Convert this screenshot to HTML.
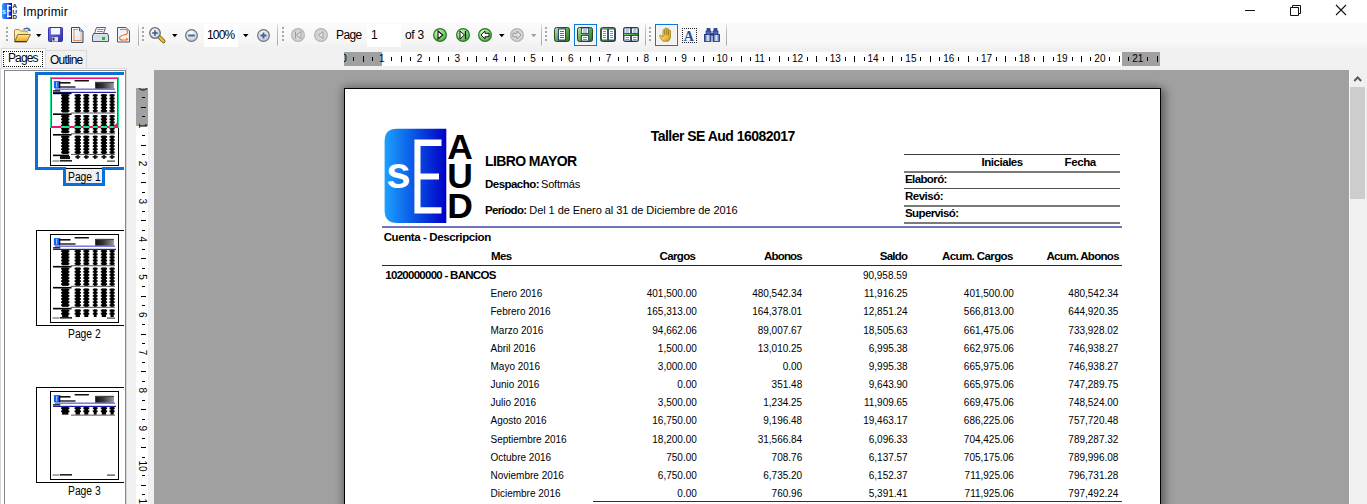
<!DOCTYPE html><html><head><meta charset='utf-8'><title>Imprimir</title><style>
*{margin:0;padding:0;box-sizing:border-box}
html,body{width:1367px;height:504px;overflow:hidden;background:#f0f0f0;font-family:"Liberation Sans",sans-serif;color:#000}
.t{position:absolute;line-height:1;white-space:pre}
.r{position:absolute}
svg{position:absolute;overflow:visible}
</style></head><body>
<div class='r' style='left:0px;top:0px;width:1367px;height:23px;background:#fff;'></div>
<svg style='left:0;top:0' width='20' height='22' viewBox='0 0 20 22'>
<defs><linearGradient id='ig' x1='0' x2='1'><stop offset='0' stop-color='#3aa0ff'/><stop offset='1' stop-color='#0010d0'/></linearGradient></defs>
<path d='M4 3H12V19H4Q2 19 2 17V5Q2 3 4 3Z' fill='url(#ig)'/>
<text x='2.1' y='14.3' font-family='Liberation Sans' font-weight='bold' font-size='7.5' fill='#d8ecff'>s</text>
<rect x='7.2' y='4.5' width='1.4' height='13' fill='#fff'/><rect x='7' y='5' width='4' height='1.3' fill='#fff'/><rect x='7' y='10.3' width='3.5' height='1.3' fill='#fff'/><rect x='7' y='15.7' width='4' height='1.3' fill='#fff'/>
<text x='12.5' y='8.2' font-family='Liberation Sans' font-weight='bold' font-size='6.2' fill='#111'>A</text>
<text x='12.5' y='13.6' font-family='Liberation Sans' font-weight='bold' font-size='6.2' fill='#111'>U</text>
<text x='12.5' y='19' font-family='Liberation Sans' font-weight='bold' font-size='6.2' fill='#111'>D</text>
</svg>
<div class='t' style='left:23px;top:6px;font-size:12px;letter-spacing:0.2px;'>Imprimir</div>
<div class='r' style='left:1245px;top:10px;width:10px;height:1px;background:#111;'></div>
<svg style='left:1285px;top:0' width='20' height='22'><path d='M5.5 7.5h8v8h-8z M7.5 7.5v-2h8v8h-2' fill='none' stroke='#111' stroke-width='1'/></svg>
<svg style='left:1331px;top:0' width='20' height='22'><path d='M5 5L15 15M15 5L5 15' stroke='#111' stroke-width='1.1'/></svg>
<div class='r' style='left:0px;top:23px;width:1367px;height:25px;background:linear-gradient(#fafafa,#f9f9f9 70%,#f3f3f3);'></div>
<div class='r' style='left:3px;top:23px;width:135px;height:25px;background:linear-gradient(#fbfbfb,#f6f6f6 70%,#f0f0f0);'></div>
<div class='r' style='left:138px;top:24px;width:1px;height:22px;background:linear-gradient(#e8e8e8,#c0c0c0 30%,#a8a8a8 90%,#d0d0d0);'></div>
<div class='r' style='left:140px;top:23px;width:137px;height:25px;background:linear-gradient(#fbfbfb,#f6f6f6 70%,#f0f0f0);'></div>
<div class='r' style='left:277px;top:24px;width:1px;height:22px;background:linear-gradient(#e8e8e8,#c0c0c0 30%,#a8a8a8 90%,#d0d0d0);'></div>
<div class='r' style='left:279px;top:23px;width:262px;height:25px;background:linear-gradient(#fbfbfb,#f6f6f6 70%,#f0f0f0);'></div>
<div class='r' style='left:541px;top:24px;width:1px;height:22px;background:linear-gradient(#e8e8e8,#c0c0c0 30%,#a8a8a8 90%,#d0d0d0);'></div>
<div class='r' style='left:543px;top:23px;width:102px;height:25px;background:linear-gradient(#fbfbfb,#f6f6f6 70%,#f0f0f0);'></div>
<div class='r' style='left:645px;top:24px;width:1px;height:22px;background:linear-gradient(#e8e8e8,#c0c0c0 30%,#a8a8a8 90%,#d0d0d0);'></div>
<div class='r' style='left:647px;top:23px;width:79px;height:25px;background:linear-gradient(#fbfbfb,#f6f6f6 70%,#f0f0f0);'></div>
<div class='r' style='left:726px;top:24px;width:1px;height:22px;background:linear-gradient(#e8e8e8,#c0c0c0 30%,#a8a8a8 90%,#d0d0d0);'></div>
<div class='r' style='left:6px;top:27px;width:2px;height:2px;background:#a8a8a8;'></div>
<div class='r' style='left:6px;top:31px;width:2px;height:2px;background:#a8a8a8;'></div>
<div class='r' style='left:6px;top:35px;width:2px;height:2px;background:#a8a8a8;'></div>
<div class='r' style='left:6px;top:39px;width:2px;height:2px;background:#a8a8a8;'></div>
<div class='r' style='left:142px;top:27px;width:2px;height:2px;background:#a8a8a8;'></div>
<div class='r' style='left:142px;top:31px;width:2px;height:2px;background:#a8a8a8;'></div>
<div class='r' style='left:142px;top:35px;width:2px;height:2px;background:#a8a8a8;'></div>
<div class='r' style='left:142px;top:39px;width:2px;height:2px;background:#a8a8a8;'></div>
<div class='r' style='left:282px;top:27px;width:2px;height:2px;background:#a8a8a8;'></div>
<div class='r' style='left:282px;top:31px;width:2px;height:2px;background:#a8a8a8;'></div>
<div class='r' style='left:282px;top:35px;width:2px;height:2px;background:#a8a8a8;'></div>
<div class='r' style='left:282px;top:39px;width:2px;height:2px;background:#a8a8a8;'></div>
<div class='r' style='left:545px;top:27px;width:2px;height:2px;background:#a8a8a8;'></div>
<div class='r' style='left:545px;top:31px;width:2px;height:2px;background:#a8a8a8;'></div>
<div class='r' style='left:545px;top:35px;width:2px;height:2px;background:#a8a8a8;'></div>
<div class='r' style='left:545px;top:39px;width:2px;height:2px;background:#a8a8a8;'></div>
<div class='r' style='left:649px;top:27px;width:2px;height:2px;background:#a8a8a8;'></div>
<div class='r' style='left:649px;top:31px;width:2px;height:2px;background:#a8a8a8;'></div>
<div class='r' style='left:649px;top:35px;width:2px;height:2px;background:#a8a8a8;'></div>
<div class='r' style='left:649px;top:39px;width:2px;height:2px;background:#a8a8a8;'></div>
<svg style='left:14px;top:26px' width='18' height='17' viewBox='0 0 18 17'>
<defs><linearGradient id='fo' x1='0' y1='0' x2='0' y2='1'><stop offset='0' stop-color='#fde68a'/><stop offset='1' stop-color='#eaa820'/></linearGradient>
<linearGradient id='fb' x1='0' y1='0' x2='1' y2='1'><stop offset='0' stop-color='#fff4b8'/><stop offset='1' stop-color='#e8c860'/></linearGradient></defs>
<path d='M0.5 15.5V4.5Q0.5 3.5 1.5 3.5H5l1.5 1.5h6.5v2.5' fill='url(#fb)' stroke='#a08850' stroke-width='1'/>
<path d='M0.5 15.5V6h12.5v2' fill='url(#fb)' stroke='none'/>
<path d='M0.5 4.5V15.5' stroke='#a08850' stroke-width='1'/>
<path d='M3.8 8.5H16.5L12.8 15.5H0.8Z' fill='url(#fo)' stroke='#8a6e30' stroke-width='1'/>
<path d='M0.8 15.8H12.8' stroke='#2a2010' stroke-width='1'/>
<path d='M9.5 3.6Q12.5 0.8 15.2 3.4' fill='none' stroke='#3a68a8' stroke-width='1.4'/><path d='M13.4 4.8L16.6 5.2L16 2.2Z' fill='#3a68a8'/>
</svg>
<svg style='left:36px;top:34px' width='6' height='4'><path d='M0 0H5.5L2.75 3.2Z' fill='#000'/></svg>
<svg style='left:48px;top:27px' width='15' height='15' viewBox='0 0 15 15'>
<defs><linearGradient id='fl' x1='0' y1='0' x2='1' y2='1'><stop offset='0' stop-color='#7a7ae8'/><stop offset='1' stop-color='#2c2ca8'/></linearGradient></defs>
<rect x='0.5' y='0.5' width='14' height='14' rx='1' fill='url(#fl)' stroke='#3232a0'/>
<rect x='3' y='1' width='9' height='6.5' fill='#f4f6ff'/>
<rect x='4' y='10' width='6' height='4.5' fill='#dfe3f0'/><rect x='4.5' y='10.5' width='2' height='3' fill='#333'/>
</svg>
<svg style='left:71px;top:27px' width='13' height='16' viewBox='0 0 13 16'>
<defs><linearGradient id='ps' x1='0' y1='0' x2='1' y2='1'><stop offset='0' stop-color='#ffffff'/><stop offset='1' stop-color='#d8e2f0'/></linearGradient></defs>
<path d='M0.5 0.5h8l3.5 3.5v11.5h-11.5z' fill='url(#ps)' stroke='#2a4468'/>
<path d='M8.5 0.5v3.5h3.5' fill='#c8d4e8' stroke='#2a4468' stroke-width='0.8'/>
<path d='M3 2v12M2 13.5h8.5M2 2.5h5' stroke='#f08848' stroke-width='1'/><path d='M10 5v8' stroke='#f0b890' stroke-width='1'/>
</svg>
<svg style='left:92px;top:27px' width='17' height='16' viewBox='0 0 17 16'>
<defs><linearGradient id='pr' x1='0' y1='0' x2='0' y2='1'><stop offset='0' stop-color='#e8eef8'/><stop offset='1' stop-color='#9aa8c0'/></linearGradient></defs>
<path d='M4.5 0.5h9l-2 6h-9z' fill='#f4f6fa' stroke='#56657e'/>
<path d='M5.5 2.5h6M5 4.5h6' stroke='#8090a8'/>
<path d='M1.5 6.5h14l1 2.5v5.5H0.5V9z' fill='url(#pr)' stroke='#4a5870'/>
<rect x='1' y='9.5' width='15' height='4.5' fill='#d8e0ee'/>
<rect x='10' y='10' width='3' height='3' fill='#18c018'/>
</svg>
<svg style='left:117px;top:27px' width='13' height='16' viewBox='0 0 13 16'>
<path d='M0.5 0.5h8.5l3.5 3.5v11h-12z' fill='#eef2f8' stroke='#3c5a80'/>
<path d='M3 2.5h5.5q2 0 2 2.5t-3.5 3t-4.5 2.5q0 3 4 2.5h3' fill='none' stroke='#f07830' stroke-width='1.2'/><path d='M9 10.5l2.6 1.7L9 14z' fill='#f07830'/>
</svg>
<svg style='left:149px;top:27px' width='17' height='16' viewBox='0 0 17 16'>
<defs><radialGradient id='mg149' cx='0.4' cy='0.35' r='0.7'><stop offset='0' stop-color='#ffffff'/><stop offset='1' stop-color='#b8cbe8'/></radialGradient></defs>
<path d='M10.2 9.8l4.2 4.4' stroke='#7a5a10' stroke-width='4' stroke-linecap='round'/><path d='M10.4 10l3.9 4.1' stroke='#e8c040' stroke-width='2.5' stroke-linecap='round'/>
<circle cx='6' cy='6' r='5.3' fill='url(#mg149)' stroke='#6a6a6a' stroke-width='1.2'/>
<path d='M3.2 6h5.6M6 3.2v5.6' stroke='#3c5a80' stroke-width='1.6'/>
</svg>
<svg style='left:172px;top:34px' width='6' height='4'><path d='M0 0H5.5L2.75 3.2Z' fill='#000'/></svg>
<svg style='left:185px;top:29px' width='13' height='13' viewBox='0 0 12 12'>
<defs><radialGradient id='zc185' cx='0.45' cy='0.3' r='0.8'><stop offset='0' stop-color='#ffffff'/><stop offset='1' stop-color='#a8c0e0'/></radialGradient></defs>
<circle cx='6' cy='6' r='5.4' fill='url(#zc185)' stroke='#707070' stroke-width='1.1'/><path d='M3 6h6' stroke='#4a6088' stroke-width='1.8'/></svg>
<div class='r' style='left:204px;top:24px;width:34px;height:23px;background:#fff;'></div>
<div class='t' style='left:207px;top:29px;font-size:12px;letter-spacing:-0.8px;'>100%</div>
<svg style='left:243px;top:34px' width='6' height='4'><path d='M0 0H5.5L2.75 3.2Z' fill='#000'/></svg>
<svg style='left:257px;top:29px' width='13' height='13' viewBox='0 0 12 12'>
<defs><radialGradient id='zc257' cx='0.45' cy='0.3' r='0.8'><stop offset='0' stop-color='#ffffff'/><stop offset='1' stop-color='#a8c0e0'/></radialGradient></defs>
<circle cx='6' cy='6' r='5.4' fill='url(#zc257)' stroke='#707070' stroke-width='1.1'/><path d='M3.2 6h5.6M6 3.2v5.6' stroke='#4a6088' stroke-width='1.7'/></svg>
<svg style='left:291px;top:28px' width='14' height='14' viewBox='0 0 14 14'><circle cx='7' cy='7' r='6.4' fill='#d4d4d4' stroke='#b4b4b4' stroke-width='1.2'/><path d='M4.5 3.5v7' stroke='#9a9a9a' stroke-width='1'/><path d='M10 3.5L5.5 7L10 10.5Z' fill='#e0e0e0' stroke='#9a9a9a' stroke-width='0.9'/></svg>
<svg style='left:314px;top:28px' width='14' height='14' viewBox='0 0 14 14'><circle cx='7' cy='7' r='6.4' fill='#d4d4d4' stroke='#b4b4b4' stroke-width='1.2'/><path d='M9 3.5L4.5 7L9 10.5Z' fill='#e0e0e0' stroke='#9a9a9a' stroke-width='0.9'/></svg>
<div class='t' style='left:336px;top:29px;font-size:12px;letter-spacing:-0.6px;'>Page</div>
<div class='r' style='left:367px;top:24px;width:34px;height:23px;background:#fff;'></div>
<div class='t' style='left:371px;top:29px;font-size:12px;'>1</div>
<div class='t' style='left:405px;top:29px;font-size:12px;letter-spacing:-0.3px;'>of 3</div>
<svg style='left:433px;top:28px' width='14' height='14' viewBox='0 0 14 14'><defs><radialGradient id='gn433' cx='0.35' cy='0.3' r='0.8'><stop offset='0' stop-color='#d8f5c8'/><stop offset='0.6' stop-color='#7ed06a'/><stop offset='1' stop-color='#3e9a3e'/></radialGradient></defs><circle cx='7' cy='7' r='6.4' fill='url(#gn433)' stroke='#2a7a2a' stroke-width='1.2'/><path d='M5 3L9.8 7L5 11Z' fill='#fff' stroke='#111' stroke-width='1.1'/></svg>
<svg style='left:456px;top:28px' width='14' height='14' viewBox='0 0 14 14'><defs><radialGradient id='gn456' cx='0.35' cy='0.3' r='0.8'><stop offset='0' stop-color='#d8f5c8'/><stop offset='0.6' stop-color='#7ed06a'/><stop offset='1' stop-color='#3e9a3e'/></radialGradient></defs><circle cx='7' cy='7' r='6.4' fill='url(#gn456)' stroke='#2a7a2a' stroke-width='1.2'/><path d='M4 3L8.5 7L4 11Z' fill='#fff' stroke='#111' stroke-width='1'/><path d='M9.5 3v8' stroke='#111' stroke-width='1.2'/></svg>
<svg style='left:478px;top:28px' width='14' height='14' viewBox='0 0 14 14'><defs><radialGradient id='gn478' cx='0.35' cy='0.3' r='0.8'><stop offset='0' stop-color='#d8f5c8'/><stop offset='0.6' stop-color='#7ed06a'/><stop offset='1' stop-color='#3e9a3e'/></radialGradient></defs><circle cx='7' cy='7' r='6.4' fill='url(#gn478)' stroke='#2a7a2a' stroke-width='1.2'/><path d='M3 7L7 3v2.3h4v3.4H7V11z' fill='#fff' stroke='#111' stroke-width='1'/></svg>
<svg style='left:499px;top:34px' width='6' height='4'><path d='M0 0H5.5L2.75 3.2Z' fill='#000'/></svg>
<svg style='left:510px;top:28px' width='14' height='14' viewBox='0 0 14 14'><circle cx='7' cy='7' r='6.4' fill='#d4d4d4' stroke='#b4b4b4' stroke-width='1.2'/><path d='M11 7L7 3v2.3H3v3.4h4V11z' fill='#e0e0e0' stroke='#9a9a9a' stroke-width='1'/></svg>
<svg style='left:531px;top:34px' width='6' height='4'><path d='M0 0H5.5L2.75 3.2Z' fill='#a0a0a0'/></svg>
<div class='r' style='left:574px;top:24px;width:23px;height:22px;border:1px solid #0a78d8;background:#f1f1f1;box-shadow:inset 0 0 0 1px #fbf7f0'></div>
<svg style='left:554px;top:27px' width='16' height='15' viewBox='0 0 16 15'>
<defs><linearGradient id='vg554' x1='0' y1='0' x2='1' y2='1'><stop offset='0' stop-color='#c0e8b8'/><stop offset='0.5' stop-color='#58a858'/><stop offset='1' stop-color='#2c6a2c'/></linearGradient></defs>
<rect x='0.5' y='0.5' width='15' height='14' rx='2' fill='url(#vg554)' stroke='#1a3a1a' stroke-width='0.9'/><rect x='4.5' y='2' width='7' height='11' fill='#fff' stroke='#203060' stroke-width='0.9'/><path d='M6 4.5h4M6 6.5h4M6 8.5h4M6 10.5h4' stroke='#4a68b8' stroke-width='1'/></svg>
<svg style='left:577px;top:27px' width='16' height='15' viewBox='0 0 16 15'>
<defs><linearGradient id='vg577' x1='0' y1='0' x2='1' y2='1'><stop offset='0' stop-color='#c0e8b8'/><stop offset='0.5' stop-color='#58a858'/><stop offset='1' stop-color='#2c6a2c'/></linearGradient></defs>
<rect x='0.5' y='0.5' width='15' height='14' rx='2' fill='url(#vg577)' stroke='#1a3a1a' stroke-width='0.9'/><rect x='4.5' y='1' width='7' height='5.5' fill='#fff' stroke='#203060' stroke-width='0.8'/><rect x='4.5' y='8.5' width='7' height='5.5' fill='#fff' stroke='#203060' stroke-width='0.8'/><path d='M6 3h4M6 5h4M6 10.5h4M6 12.5h4' stroke='#6a80c0' stroke-width='0.9'/></svg>
<svg style='left:600px;top:27px' width='16' height='15' viewBox='0 0 16 15'>
<defs><linearGradient id='vg600' x1='0' y1='0' x2='1' y2='1'><stop offset='0' stop-color='#c0e8b8'/><stop offset='0.5' stop-color='#58a858'/><stop offset='1' stop-color='#2c6a2c'/></linearGradient></defs>
<rect x='0.5' y='0.5' width='15' height='14' rx='2' fill='url(#vg600)' stroke='#1a3a1a' stroke-width='0.9'/><rect x='1.5' y='2' width='6' height='11' fill='#fff' stroke='#203060' stroke-width='0.8'/><rect x='8.5' y='2' width='6' height='11' fill='#fff' stroke='#203060' stroke-width='0.8'/><path d='M3 4.5h3M3 6.5h3M3 8.5h3M3 10.5h3M10 4.5h3M10 6.5h3M10 8.5h3M10 10.5h3' stroke='#6a80c0' stroke-width='0.9'/></svg>
<svg style='left:623px;top:27px' width='16' height='15' viewBox='0 0 16 15'>
<defs><linearGradient id='vg623' x1='0' y1='0' x2='1' y2='1'><stop offset='0' stop-color='#c0e8b8'/><stop offset='0.5' stop-color='#58a858'/><stop offset='1' stop-color='#2c6a2c'/></linearGradient></defs>
<rect x='0.5' y='0.5' width='15' height='14' rx='2' fill='url(#vg623)' stroke='#1a3a1a' stroke-width='0.9'/><rect x='1' y='1' width='6.5' height='5.5' fill='#fff' stroke='#203060' stroke-width='0.8'/><rect x='8.5' y='1' width='6.5' height='5.5' fill='#fff' stroke='#203060' stroke-width='0.8'/><rect x='1' y='8.5' width='6.5' height='5.5' fill='#fff' stroke='#203060' stroke-width='0.8'/><rect x='8.5' y='8.5' width='6.5' height='5.5' fill='#fff' stroke='#203060' stroke-width='0.8'/><path d='M2.5 3h3.5M2.5 5h3.5M10 3h3.5M10 5h3.5M2.5 10.5h3.5M2.5 12.5h3.5M10 10.5h3.5M10 12.5h3.5' stroke='#6a80c0' stroke-width='0.9'/></svg>
<div class='r' style='left:655px;top:24px;width:23px;height:22px;border:1px solid #0a78d8;background:#f1f1f1;box-shadow:inset 0 0 0 1px #fbf7f0'></div>
<svg style='left:659px;top:27px' width='14' height='15' viewBox='0 0 14 15'>
<defs><linearGradient id='hd' x1='0' y1='0' x2='1' y2='1'><stop offset='0' stop-color='#fff4a8'/><stop offset='0.6' stop-color='#f0c848'/><stop offset='1' stop-color='#c89010'/></linearGradient></defs>
<path d='M4 14.2Q1.5 11.5 0.6 9.2Q0.6 8 1.8 8.3L4 10V3.6Q4 2.6 4.9 2.6Q5.8 2.6 5.8 3.6V7.5V2Q5.8 1 6.8 1Q7.8 1 7.8 2V7.5V2.6Q7.8 1.6 8.7 1.6Q9.6 1.6 9.6 2.6V7.8V4Q9.6 3.1 10.5 3.1Q11.4 3.1 11.4 4V10Q11.4 13 9.2 14.2Z' fill='url(#hd)' stroke='#a07818' stroke-width='0.8'/>
<path d='M5.8 7.5V9M7.8 7.5V9M9.6 7.8V9' stroke='#b08820' stroke-width='0.6'/>
</svg>
<div class='r' style='left:682px;top:28px;width:15px;height:15px;border:1.2px dotted #222'></div>
<svg style='left:682px;top:28px' width='15' height='15' viewBox='0 0 15 15'><text x='1.8' y='13' font-family='Liberation Serif' font-weight='bold' font-size='14' fill='#2a4a98'>A</text></svg>
<svg style='left:704px;top:28px' width='16' height='14' viewBox='0 0 16 14'>
<defs><linearGradient id='bn' x1='0' y1='0' x2='1' y2='0'><stop offset='0' stop-color='#203a88'/><stop offset='0.5' stop-color='#e8eef8'/><stop offset='1' stop-color='#3050a0'/></linearGradient></defs>
<rect x='3' y='0.5' width='3' height='3' fill='#3a5aa8' stroke='#1c3078' stroke-width='0.7'/><rect x='10' y='0.5' width='3' height='3' fill='#3a5aa8' stroke='#1c3078' stroke-width='0.7'/>
<rect x='2' y='3' width='5' height='4' fill='#4a6ab8' stroke='#1c3078' stroke-width='0.7'/><rect x='9' y='3' width='5' height='4' fill='#4a6ab8' stroke='#1c3078' stroke-width='0.7'/>
<rect x='6' y='5' width='4' height='2.5' fill='#2a4a98'/>
<rect x='0.5' y='6.5' width='6.5' height='7' fill='url(#bn)' stroke='#1c3078' stroke-width='0.8'/><rect x='9' y='6.5' width='6.5' height='7' fill='url(#bn)' stroke='#1c3078' stroke-width='0.8'/>
</svg>
<div class='r' style='left:45px;top:50px;width:42px;height:19px;background:#f0f0f0;border:1px solid #d9d9d9;border-bottom:none'></div>
<div class='r' style='left:1px;top:48px;width:45px;height:22px;background:#fff;border:1px solid #d9d9d9;border-bottom:none'></div>
<div class='r' style='left:3px;top:51px;width:40px;height:16px;border:1px dotted #111'></div>
<div class='t' style='left:8px;top:52px;font-size:12px;letter-spacing:-0.9px;'>Pages</div>
<div class='t' style='left:50px;top:54px;font-size:12px;letter-spacing:-0.8px;'>Outline</div>
<div class='r' style='left:0px;top:68px;width:127px;height:436px;background:#fff;border:1px solid #d9d9d9;border-bottom:none'></div>
<div class='r' style='left:4px;top:70px;width:122px;height:434px;background:#fff;border:1px solid #828790;border-bottom:none'></div>
<div class='r' style='left:35px;top:72px;width:89px;height:98px;border:3px solid #0a6ed6;border-right:none'></div>
<div class='r' style='left:63px;top:167px;width:42px;height:19px;border:3px solid #0a6ed6;border-top:none;background:#f0f0f0'></div>
<div class='r' style='left:66px;top:167px;width:36px;height:3px;background:#f0f0f0'></div><div class='r' style='left:66px;top:168px;width:36px;height:1px;background:#000'></div>
<div class='t' style='left:67.5px;top:171px;font-size:12px;transform:scaleX(0.86);transform-origin:0 0'>Page 1</div>
<svg style='left:0;top:0' width='130' height='504' viewBox='0 0 130 504'><rect x='50.5' y='77.5' width='68' height='88' fill='#fff' stroke='#000' stroke-width='1'/><rect x='53.9' y='81.1' width='5.2' height='7.2' fill='#1060f0'/><rect x='56.2' y='82' width='1' height='5.4' fill='#fff' opacity='0.7'/><rect x='59' y='81.3' width='1.3' height='7' fill='#111'/><rect x='59.5' y='82' width='11' height='1.6' fill='#111'/><rect x='59.5' y='86.2' width='16' height='1.6' fill='#222' opacity='0.9'/><rect x='74.6' y='80' width='14.3' height='1.5' fill='#111'/><defs><linearGradient id='gb1' x1='0' x2='1'><stop offset='0' stop-color='#111'/><stop offset='0.4' stop-color='#333'/><stop offset='1' stop-color='#9a9a9a'/></linearGradient></defs><rect x='95.2' y='81.9' width='18.7' height='6.8' fill='url(#gb1)'/><rect x='95.2' y='81.9' width='18.7' height='1.2' fill='#444'/><rect x='55' y='88.6' width='60' height='1.1' fill='#4848c0'/><rect x='53.1' y='90.2' width='7.2' height='1.3' fill='#000'/><rect x='53' y='91.8' width='63' height='1.2' fill='#2020a0'/><rect x='53' y='92.60' width='18.5' height='1.6' fill='#000'/><rect x='62.1' y='94.20' width='6.30' height='18.36' fill='#000'/><rect x='61.1' y='94.50' width='8.30' height='1.8' fill='#000'/><rect x='61.1' y='97.60' width='8.30' height='1.8' fill='#000'/><rect x='61.1' y='100.70' width='8.30' height='1.8' fill='#000'/><rect x='61.1' y='103.80' width='8.30' height='1.8' fill='#000'/><rect x='61.1' y='106.90' width='8.30' height='1.8' fill='#000'/><rect x='61.1' y='110.00' width='8.30' height='1.8' fill='#000'/><rect x='75.6' y='94.20' width='4.30' height='18.36' fill='#000'/><rect x='74.6' y='94.50' width='6.30' height='1.8' fill='#000'/><rect x='74.6' y='97.60' width='6.30' height='1.8' fill='#000'/><rect x='74.6' y='100.70' width='6.30' height='1.8' fill='#000'/><rect x='74.6' y='103.80' width='6.30' height='1.8' fill='#000'/><rect x='74.6' y='106.90' width='6.30' height='1.8' fill='#000'/><rect x='74.6' y='110.00' width='6.30' height='1.8' fill='#000'/><rect x='84.3' y='94.20' width='4.00' height='18.36' fill='#000'/><rect x='83.3' y='94.50' width='6.00' height='1.8' fill='#000'/><rect x='83.3' y='97.60' width='6.00' height='1.8' fill='#000'/><rect x='83.3' y='100.70' width='6.00' height='1.8' fill='#000'/><rect x='83.3' y='103.80' width='6.00' height='1.8' fill='#000'/><rect x='83.3' y='106.90' width='6.00' height='1.8' fill='#000'/><rect x='83.3' y='110.00' width='6.00' height='1.8' fill='#000'/><rect x='93.8' y='94.20' width='2.80' height='18.36' fill='#000'/><rect x='92.8' y='94.50' width='4.80' height='1.8' fill='#000'/><rect x='92.8' y='97.60' width='4.80' height='1.8' fill='#000'/><rect x='92.8' y='100.70' width='4.80' height='1.8' fill='#000'/><rect x='92.8' y='103.80' width='4.80' height='1.8' fill='#000'/><rect x='92.8' y='106.90' width='4.80' height='1.8' fill='#000'/><rect x='92.8' y='110.00' width='4.80' height='1.8' fill='#000'/><rect x='101.8' y='94.20' width='4.30' height='18.36' fill='#000'/><rect x='100.8' y='94.50' width='6.30' height='1.8' fill='#000'/><rect x='100.8' y='97.60' width='6.30' height='1.8' fill='#000'/><rect x='100.8' y='100.70' width='6.30' height='1.8' fill='#000'/><rect x='100.8' y='103.80' width='6.30' height='1.8' fill='#000'/><rect x='100.8' y='106.90' width='6.30' height='1.8' fill='#000'/><rect x='100.8' y='110.00' width='6.30' height='1.8' fill='#000'/><rect x='110.5' y='94.20' width='3.20' height='18.36' fill='#000'/><rect x='109.5' y='94.50' width='5.20' height='1.8' fill='#000'/><rect x='109.5' y='97.60' width='5.20' height='1.8' fill='#000'/><rect x='109.5' y='100.70' width='5.20' height='1.8' fill='#000'/><rect x='109.5' y='103.80' width='5.20' height='1.8' fill='#000'/><rect x='109.5' y='106.90' width='5.20' height='1.8' fill='#000'/><rect x='109.5' y='110.00' width='5.20' height='1.8' fill='#000'/><rect x='71' y='112.56' width='44' height='0.9' fill='#444'/><rect x='53' y='113.40' width='18.5' height='1.6' fill='#000'/><rect x='62.1' y='115.00' width='6.30' height='18.36' fill='#000'/><rect x='61.1' y='115.30' width='8.30' height='1.8' fill='#000'/><rect x='61.1' y='118.40' width='8.30' height='1.8' fill='#000'/><rect x='61.1' y='121.50' width='8.30' height='1.8' fill='#000'/><rect x='61.1' y='124.60' width='8.30' height='1.8' fill='#000'/><rect x='61.1' y='127.70' width='8.30' height='1.8' fill='#000'/><rect x='61.1' y='130.80' width='8.30' height='1.8' fill='#000'/><rect x='75.6' y='115.00' width='4.30' height='18.36' fill='#000'/><rect x='74.6' y='115.30' width='6.30' height='1.8' fill='#000'/><rect x='74.6' y='118.40' width='6.30' height='1.8' fill='#000'/><rect x='74.6' y='121.50' width='6.30' height='1.8' fill='#000'/><rect x='74.6' y='124.60' width='6.30' height='1.8' fill='#000'/><rect x='74.6' y='127.70' width='6.30' height='1.8' fill='#000'/><rect x='74.6' y='130.80' width='6.30' height='1.8' fill='#000'/><rect x='84.3' y='115.00' width='4.00' height='18.36' fill='#000'/><rect x='83.3' y='115.30' width='6.00' height='1.8' fill='#000'/><rect x='83.3' y='118.40' width='6.00' height='1.8' fill='#000'/><rect x='83.3' y='121.50' width='6.00' height='1.8' fill='#000'/><rect x='83.3' y='124.60' width='6.00' height='1.8' fill='#000'/><rect x='83.3' y='127.70' width='6.00' height='1.8' fill='#000'/><rect x='83.3' y='130.80' width='6.00' height='1.8' fill='#000'/><rect x='93.8' y='115.00' width='2.80' height='18.36' fill='#000'/><rect x='92.8' y='115.30' width='4.80' height='1.8' fill='#000'/><rect x='92.8' y='118.40' width='4.80' height='1.8' fill='#000'/><rect x='92.8' y='121.50' width='4.80' height='1.8' fill='#000'/><rect x='92.8' y='124.60' width='4.80' height='1.8' fill='#000'/><rect x='92.8' y='127.70' width='4.80' height='1.8' fill='#000'/><rect x='92.8' y='130.80' width='4.80' height='1.8' fill='#000'/><rect x='101.8' y='115.00' width='4.30' height='18.36' fill='#000'/><rect x='100.8' y='115.30' width='6.30' height='1.8' fill='#000'/><rect x='100.8' y='118.40' width='6.30' height='1.8' fill='#000'/><rect x='100.8' y='121.50' width='6.30' height='1.8' fill='#000'/><rect x='100.8' y='124.60' width='6.30' height='1.8' fill='#000'/><rect x='100.8' y='127.70' width='6.30' height='1.8' fill='#000'/><rect x='100.8' y='130.80' width='6.30' height='1.8' fill='#000'/><rect x='110.5' y='115.00' width='3.20' height='18.36' fill='#000'/><rect x='109.5' y='115.30' width='5.20' height='1.8' fill='#000'/><rect x='109.5' y='118.40' width='5.20' height='1.8' fill='#000'/><rect x='109.5' y='121.50' width='5.20' height='1.8' fill='#000'/><rect x='109.5' y='124.60' width='5.20' height='1.8' fill='#000'/><rect x='109.5' y='127.70' width='5.20' height='1.8' fill='#000'/><rect x='109.5' y='130.80' width='5.20' height='1.8' fill='#000'/><rect x='71' y='133.36' width='44' height='0.9' fill='#444'/><rect x='53' y='134.00' width='18.5' height='1.6' fill='#000'/><rect x='62.1' y='135.60' width='6.30' height='18.36' fill='#000'/><rect x='61.1' y='135.90' width='8.30' height='1.8' fill='#000'/><rect x='61.1' y='139.00' width='8.30' height='1.8' fill='#000'/><rect x='61.1' y='142.10' width='8.30' height='1.8' fill='#000'/><rect x='61.1' y='145.20' width='8.30' height='1.8' fill='#000'/><rect x='61.1' y='148.30' width='8.30' height='1.8' fill='#000'/><rect x='61.1' y='151.40' width='8.30' height='1.8' fill='#000'/><rect x='75.6' y='135.60' width='4.30' height='18.36' fill='#000'/><rect x='74.6' y='135.90' width='6.30' height='1.8' fill='#000'/><rect x='74.6' y='139.00' width='6.30' height='1.8' fill='#000'/><rect x='74.6' y='142.10' width='6.30' height='1.8' fill='#000'/><rect x='74.6' y='145.20' width='6.30' height='1.8' fill='#000'/><rect x='74.6' y='148.30' width='6.30' height='1.8' fill='#000'/><rect x='74.6' y='151.40' width='6.30' height='1.8' fill='#000'/><rect x='84.3' y='135.60' width='4.00' height='18.36' fill='#000'/><rect x='83.3' y='135.90' width='6.00' height='1.8' fill='#000'/><rect x='83.3' y='139.00' width='6.00' height='1.8' fill='#000'/><rect x='83.3' y='142.10' width='6.00' height='1.8' fill='#000'/><rect x='83.3' y='145.20' width='6.00' height='1.8' fill='#000'/><rect x='83.3' y='148.30' width='6.00' height='1.8' fill='#000'/><rect x='83.3' y='151.40' width='6.00' height='1.8' fill='#000'/><rect x='93.8' y='135.60' width='2.80' height='18.36' fill='#000'/><rect x='92.8' y='135.90' width='4.80' height='1.8' fill='#000'/><rect x='92.8' y='139.00' width='4.80' height='1.8' fill='#000'/><rect x='92.8' y='142.10' width='4.80' height='1.8' fill='#000'/><rect x='92.8' y='145.20' width='4.80' height='1.8' fill='#000'/><rect x='92.8' y='148.30' width='4.80' height='1.8' fill='#000'/><rect x='92.8' y='151.40' width='4.80' height='1.8' fill='#000'/><rect x='101.8' y='135.60' width='4.30' height='18.36' fill='#000'/><rect x='100.8' y='135.90' width='6.30' height='1.8' fill='#000'/><rect x='100.8' y='139.00' width='6.30' height='1.8' fill='#000'/><rect x='100.8' y='142.10' width='6.30' height='1.8' fill='#000'/><rect x='100.8' y='145.20' width='6.30' height='1.8' fill='#000'/><rect x='100.8' y='148.30' width='6.30' height='1.8' fill='#000'/><rect x='100.8' y='151.40' width='6.30' height='1.8' fill='#000'/><rect x='110.5' y='135.60' width='3.20' height='18.36' fill='#000'/><rect x='109.5' y='135.90' width='5.20' height='1.8' fill='#000'/><rect x='109.5' y='139.00' width='5.20' height='1.8' fill='#000'/><rect x='109.5' y='142.10' width='5.20' height='1.8' fill='#000'/><rect x='109.5' y='145.20' width='5.20' height='1.8' fill='#000'/><rect x='109.5' y='148.30' width='5.20' height='1.8' fill='#000'/><rect x='109.5' y='151.40' width='5.20' height='1.8' fill='#000'/><rect x='71' y='153.96' width='44' height='0.9' fill='#444'/><rect x='53' y='154.60' width='16' height='1.6' fill='#000'/><rect x='62.75' y='156.10' width='5' height='1.6' fill='#111'/><rect x='64.05' y='155.20' width='2.4' height='3.6' fill='#111'/><rect x='75.25' y='156.10' width='5' height='1.6' fill='#111'/><rect x='76.55' y='155.20' width='2.4' height='3.6' fill='#111'/><rect x='83.80' y='156.10' width='5' height='1.6' fill='#111'/><rect x='85.10' y='155.20' width='2.4' height='3.6' fill='#111'/><rect x='92.70' y='156.10' width='5' height='1.6' fill='#111'/><rect x='94.00' y='155.20' width='2.4' height='3.6' fill='#111'/><rect x='101.45' y='156.10' width='5' height='1.6' fill='#111'/><rect x='102.75' y='155.20' width='2.4' height='3.6' fill='#111'/><rect x='109.60' y='156.10' width='5' height='1.6' fill='#111'/><rect x='110.90' y='155.20' width='2.4' height='3.6' fill='#111'/><rect x='60' y='156.10' width='10' height='3' fill='#111'/><rect x='52.5' y='160.5' width='7' height='1' fill='#555'/><rect x='60' y='160' width='12' height='1.6' fill='#222'/><rect x='107' y='160.5' width='8' height='1.2' fill='#444'/></svg>
<svg style='left:0;top:0' width='130' height='200'><rect x='50.5' y='77.5' width='68' height='50' fill='none' stroke='#10e888' stroke-width='1'/><rect x='51.5' y='78.5' width='66' height='48' fill='none' stroke='#f01080' stroke-width='1'/><rect x='51' y='126' width='67' height='2' fill='#f01080'/><rect x='61.1' y='126' width='8.30' height='2' fill='#10f080'/><rect x='74.6' y='126' width='6.30' height='2' fill='#10f080'/><rect x='83.3' y='126' width='6.00' height='2' fill='#10f080'/><rect x='92.8' y='126' width='4.80' height='2' fill='#10f080'/><rect x='100.8' y='126' width='6.30' height='2' fill='#10f080'/><rect x='109.5' y='126' width='5.20' height='2' fill='#10f080'/><path d='M118 121.5V127.5H113Z' fill='#f01080'/></svg>
<div class='r' style='left:36px;top:230px;width:88px;height:96px;border:1px solid #000;border-right:none'></div>
<svg style='left:0;top:0' width='130' height='504' viewBox='0 0 130 504'><rect x='50.5' y='234.5' width='68' height='88' fill='#fff' stroke='#000' stroke-width='1'/><rect x='53.9' y='238.1' width='5.2' height='7.2' fill='#1060f0'/><rect x='56.2' y='239' width='1' height='5.4' fill='#fff' opacity='0.7'/><rect x='59' y='238.3' width='1.3' height='7' fill='#111'/><rect x='59.5' y='239' width='11' height='1.6' fill='#111'/><rect x='59.5' y='243.2' width='16' height='1.6' fill='#222' opacity='0.9'/><rect x='74.6' y='237' width='14.3' height='1.5' fill='#111'/><defs><linearGradient id='gb2' x1='0' x2='1'><stop offset='0' stop-color='#111'/><stop offset='0.4' stop-color='#333'/><stop offset='1' stop-color='#9a9a9a'/></linearGradient></defs><rect x='95.2' y='238.9' width='18.7' height='6.8' fill='url(#gb2)'/><rect x='95.2' y='238.9' width='18.7' height='1.2' fill='#444'/><rect x='55' y='245.6' width='60' height='1.1' fill='#4848c0'/><rect x='53.1' y='247.2' width='7.2' height='1.3' fill='#000'/><rect x='53' y='248.8' width='63' height='1.2' fill='#2020a0'/><rect x='62.1' y='250.00' width='6.30' height='15.30' fill='#000'/><rect x='61.1' y='250.30' width='8.30' height='1.8' fill='#000'/><rect x='61.1' y='253.40' width='8.30' height='1.8' fill='#000'/><rect x='61.1' y='256.50' width='8.30' height='1.8' fill='#000'/><rect x='61.1' y='259.60' width='8.30' height='1.8' fill='#000'/><rect x='61.1' y='262.70' width='8.30' height='1.8' fill='#000'/><rect x='75.6' y='250.00' width='4.30' height='15.30' fill='#000'/><rect x='74.6' y='250.30' width='6.30' height='1.8' fill='#000'/><rect x='74.6' y='253.40' width='6.30' height='1.8' fill='#000'/><rect x='74.6' y='256.50' width='6.30' height='1.8' fill='#000'/><rect x='74.6' y='259.60' width='6.30' height='1.8' fill='#000'/><rect x='74.6' y='262.70' width='6.30' height='1.8' fill='#000'/><rect x='84.3' y='250.00' width='4.00' height='15.30' fill='#000'/><rect x='83.3' y='250.30' width='6.00' height='1.8' fill='#000'/><rect x='83.3' y='253.40' width='6.00' height='1.8' fill='#000'/><rect x='83.3' y='256.50' width='6.00' height='1.8' fill='#000'/><rect x='83.3' y='259.60' width='6.00' height='1.8' fill='#000'/><rect x='83.3' y='262.70' width='6.00' height='1.8' fill='#000'/><rect x='93.8' y='250.00' width='2.80' height='15.30' fill='#000'/><rect x='92.8' y='250.30' width='4.80' height='1.8' fill='#000'/><rect x='92.8' y='253.40' width='4.80' height='1.8' fill='#000'/><rect x='92.8' y='256.50' width='4.80' height='1.8' fill='#000'/><rect x='92.8' y='259.60' width='4.80' height='1.8' fill='#000'/><rect x='92.8' y='262.70' width='4.80' height='1.8' fill='#000'/><rect x='101.8' y='250.00' width='4.30' height='15.30' fill='#000'/><rect x='100.8' y='250.30' width='6.30' height='1.8' fill='#000'/><rect x='100.8' y='253.40' width='6.30' height='1.8' fill='#000'/><rect x='100.8' y='256.50' width='6.30' height='1.8' fill='#000'/><rect x='100.8' y='259.60' width='6.30' height='1.8' fill='#000'/><rect x='100.8' y='262.70' width='6.30' height='1.8' fill='#000'/><rect x='110.5' y='250.00' width='3.20' height='15.30' fill='#000'/><rect x='109.5' y='250.30' width='5.20' height='1.8' fill='#000'/><rect x='109.5' y='253.40' width='5.20' height='1.8' fill='#000'/><rect x='109.5' y='256.50' width='5.20' height='1.8' fill='#000'/><rect x='109.5' y='259.60' width='5.20' height='1.8' fill='#000'/><rect x='109.5' y='262.70' width='5.20' height='1.8' fill='#000'/><rect x='71' y='265.30' width='44' height='0.9' fill='#444'/><rect x='53' y='265.90' width='18.5' height='1.6' fill='#000'/><rect x='62.1' y='267.50' width='6.30' height='18.36' fill='#000'/><rect x='61.1' y='267.80' width='8.30' height='1.8' fill='#000'/><rect x='61.1' y='270.90' width='8.30' height='1.8' fill='#000'/><rect x='61.1' y='274.00' width='8.30' height='1.8' fill='#000'/><rect x='61.1' y='277.10' width='8.30' height='1.8' fill='#000'/><rect x='61.1' y='280.20' width='8.30' height='1.8' fill='#000'/><rect x='61.1' y='283.30' width='8.30' height='1.8' fill='#000'/><rect x='75.6' y='267.50' width='4.30' height='18.36' fill='#000'/><rect x='74.6' y='267.80' width='6.30' height='1.8' fill='#000'/><rect x='74.6' y='270.90' width='6.30' height='1.8' fill='#000'/><rect x='74.6' y='274.00' width='6.30' height='1.8' fill='#000'/><rect x='74.6' y='277.10' width='6.30' height='1.8' fill='#000'/><rect x='74.6' y='280.20' width='6.30' height='1.8' fill='#000'/><rect x='74.6' y='283.30' width='6.30' height='1.8' fill='#000'/><rect x='84.3' y='267.50' width='4.00' height='18.36' fill='#000'/><rect x='83.3' y='267.80' width='6.00' height='1.8' fill='#000'/><rect x='83.3' y='270.90' width='6.00' height='1.8' fill='#000'/><rect x='83.3' y='274.00' width='6.00' height='1.8' fill='#000'/><rect x='83.3' y='277.10' width='6.00' height='1.8' fill='#000'/><rect x='83.3' y='280.20' width='6.00' height='1.8' fill='#000'/><rect x='83.3' y='283.30' width='6.00' height='1.8' fill='#000'/><rect x='93.8' y='267.50' width='2.80' height='18.36' fill='#000'/><rect x='92.8' y='267.80' width='4.80' height='1.8' fill='#000'/><rect x='92.8' y='270.90' width='4.80' height='1.8' fill='#000'/><rect x='92.8' y='274.00' width='4.80' height='1.8' fill='#000'/><rect x='92.8' y='277.10' width='4.80' height='1.8' fill='#000'/><rect x='92.8' y='280.20' width='4.80' height='1.8' fill='#000'/><rect x='92.8' y='283.30' width='4.80' height='1.8' fill='#000'/><rect x='101.8' y='267.50' width='4.30' height='18.36' fill='#000'/><rect x='100.8' y='267.80' width='6.30' height='1.8' fill='#000'/><rect x='100.8' y='270.90' width='6.30' height='1.8' fill='#000'/><rect x='100.8' y='274.00' width='6.30' height='1.8' fill='#000'/><rect x='100.8' y='277.10' width='6.30' height='1.8' fill='#000'/><rect x='100.8' y='280.20' width='6.30' height='1.8' fill='#000'/><rect x='100.8' y='283.30' width='6.30' height='1.8' fill='#000'/><rect x='110.5' y='267.50' width='3.20' height='18.36' fill='#000'/><rect x='109.5' y='267.80' width='5.20' height='1.8' fill='#000'/><rect x='109.5' y='270.90' width='5.20' height='1.8' fill='#000'/><rect x='109.5' y='274.00' width='5.20' height='1.8' fill='#000'/><rect x='109.5' y='277.10' width='5.20' height='1.8' fill='#000'/><rect x='109.5' y='280.20' width='5.20' height='1.8' fill='#000'/><rect x='109.5' y='283.30' width='5.20' height='1.8' fill='#000'/><rect x='71' y='285.86' width='44' height='0.9' fill='#444'/><rect x='53' y='286.90' width='18.5' height='1.6' fill='#000'/><rect x='62.1' y='288.50' width='6.30' height='18.36' fill='#000'/><rect x='61.1' y='288.80' width='8.30' height='1.8' fill='#000'/><rect x='61.1' y='291.90' width='8.30' height='1.8' fill='#000'/><rect x='61.1' y='295.00' width='8.30' height='1.8' fill='#000'/><rect x='61.1' y='298.10' width='8.30' height='1.8' fill='#000'/><rect x='61.1' y='301.20' width='8.30' height='1.8' fill='#000'/><rect x='61.1' y='304.30' width='8.30' height='1.8' fill='#000'/><rect x='75.6' y='288.50' width='4.30' height='18.36' fill='#000'/><rect x='74.6' y='288.80' width='6.30' height='1.8' fill='#000'/><rect x='74.6' y='291.90' width='6.30' height='1.8' fill='#000'/><rect x='74.6' y='295.00' width='6.30' height='1.8' fill='#000'/><rect x='74.6' y='298.10' width='6.30' height='1.8' fill='#000'/><rect x='74.6' y='301.20' width='6.30' height='1.8' fill='#000'/><rect x='74.6' y='304.30' width='6.30' height='1.8' fill='#000'/><rect x='84.3' y='288.50' width='4.00' height='18.36' fill='#000'/><rect x='83.3' y='288.80' width='6.00' height='1.8' fill='#000'/><rect x='83.3' y='291.90' width='6.00' height='1.8' fill='#000'/><rect x='83.3' y='295.00' width='6.00' height='1.8' fill='#000'/><rect x='83.3' y='298.10' width='6.00' height='1.8' fill='#000'/><rect x='83.3' y='301.20' width='6.00' height='1.8' fill='#000'/><rect x='83.3' y='304.30' width='6.00' height='1.8' fill='#000'/><rect x='93.8' y='288.50' width='2.80' height='18.36' fill='#000'/><rect x='92.8' y='288.80' width='4.80' height='1.8' fill='#000'/><rect x='92.8' y='291.90' width='4.80' height='1.8' fill='#000'/><rect x='92.8' y='295.00' width='4.80' height='1.8' fill='#000'/><rect x='92.8' y='298.10' width='4.80' height='1.8' fill='#000'/><rect x='92.8' y='301.20' width='4.80' height='1.8' fill='#000'/><rect x='92.8' y='304.30' width='4.80' height='1.8' fill='#000'/><rect x='101.8' y='288.50' width='4.30' height='18.36' fill='#000'/><rect x='100.8' y='288.80' width='6.30' height='1.8' fill='#000'/><rect x='100.8' y='291.90' width='6.30' height='1.8' fill='#000'/><rect x='100.8' y='295.00' width='6.30' height='1.8' fill='#000'/><rect x='100.8' y='298.10' width='6.30' height='1.8' fill='#000'/><rect x='100.8' y='301.20' width='6.30' height='1.8' fill='#000'/><rect x='100.8' y='304.30' width='6.30' height='1.8' fill='#000'/><rect x='110.5' y='288.50' width='3.20' height='18.36' fill='#000'/><rect x='109.5' y='288.80' width='5.20' height='1.8' fill='#000'/><rect x='109.5' y='291.90' width='5.20' height='1.8' fill='#000'/><rect x='109.5' y='295.00' width='5.20' height='1.8' fill='#000'/><rect x='109.5' y='298.10' width='5.20' height='1.8' fill='#000'/><rect x='109.5' y='301.20' width='5.20' height='1.8' fill='#000'/><rect x='109.5' y='304.30' width='5.20' height='1.8' fill='#000'/><rect x='71' y='306.86' width='44' height='0.9' fill='#444'/><rect x='53' y='307.80' width='18.5' height='1.6' fill='#000'/><rect x='62.1' y='309.40' width='6.30' height='7.65' fill='#000'/><rect x='61.1' y='309.70' width='8.30' height='1.8' fill='#000'/><rect x='61.1' y='312.80' width='8.30' height='1.8' fill='#000'/><rect x='75.6' y='309.40' width='4.30' height='7.65' fill='#000'/><rect x='74.6' y='309.70' width='6.30' height='1.8' fill='#000'/><rect x='74.6' y='312.80' width='6.30' height='1.8' fill='#000'/><rect x='84.3' y='309.40' width='4.00' height='7.65' fill='#000'/><rect x='83.3' y='309.70' width='6.00' height='1.8' fill='#000'/><rect x='83.3' y='312.80' width='6.00' height='1.8' fill='#000'/><rect x='93.8' y='309.40' width='2.80' height='7.65' fill='#000'/><rect x='92.8' y='309.70' width='4.80' height='1.8' fill='#000'/><rect x='92.8' y='312.80' width='4.80' height='1.8' fill='#000'/><rect x='101.8' y='309.40' width='4.30' height='7.65' fill='#000'/><rect x='100.8' y='309.70' width='6.30' height='1.8' fill='#000'/><rect x='100.8' y='312.80' width='6.30' height='1.8' fill='#000'/><rect x='110.5' y='309.40' width='3.20' height='7.65' fill='#000'/><rect x='109.5' y='309.70' width='5.20' height='1.8' fill='#000'/><rect x='109.5' y='312.80' width='5.20' height='1.8' fill='#000'/><rect x='52.5' y='317.5' width='7' height='1' fill='#555'/><rect x='60' y='317' width='12' height='1.6' fill='#222'/><rect x='107' y='317.5' width='8' height='1.2' fill='#444'/></svg>
<div class='t' style='left:67.5px;top:328px;font-size:12px;transform:scaleX(0.86);transform-origin:0 0'>Page 2</div>
<div class='r' style='left:36px;top:387px;width:88px;height:96px;border:1px solid #000;border-right:none'></div>
<svg style='left:0;top:0' width='130' height='504' viewBox='0 0 130 504'><rect x='50.5' y='391.5' width='68' height='88' fill='#fff' stroke='#000' stroke-width='1'/><rect x='53.9' y='395.1' width='5.2' height='7.2' fill='#1060f0'/><rect x='56.2' y='396' width='1' height='5.4' fill='#fff' opacity='0.7'/><rect x='59' y='395.3' width='1.3' height='7' fill='#111'/><rect x='59.5' y='396' width='11' height='1.6' fill='#111'/><rect x='59.5' y='400.2' width='16' height='1.6' fill='#222' opacity='0.9'/><rect x='74.6' y='394' width='14.3' height='1.5' fill='#111'/><defs><linearGradient id='gb3' x1='0' x2='1'><stop offset='0' stop-color='#111'/><stop offset='0.4' stop-color='#333'/><stop offset='1' stop-color='#9a9a9a'/></linearGradient></defs><rect x='95.2' y='395.9' width='18.7' height='6.8' fill='url(#gb3)'/><rect x='95.2' y='395.9' width='18.7' height='1.2' fill='#444'/><rect x='55' y='402.6' width='60' height='1.1' fill='#4848c0'/><rect x='53.1' y='404.2' width='7.2' height='1.3' fill='#000'/><rect x='53' y='405.8' width='63' height='1.2' fill='#2020a0'/><rect x='62.1' y='407.00' width='6.30' height='7.65' fill='#000'/><rect x='61.1' y='407.30' width='8.30' height='1.8' fill='#000'/><rect x='61.1' y='410.40' width='8.30' height='1.8' fill='#000'/><rect x='75.6' y='407.00' width='4.30' height='7.65' fill='#000'/><rect x='74.6' y='407.30' width='6.30' height='1.8' fill='#000'/><rect x='74.6' y='410.40' width='6.30' height='1.8' fill='#000'/><rect x='84.3' y='407.00' width='4.00' height='7.65' fill='#000'/><rect x='83.3' y='407.30' width='6.00' height='1.8' fill='#000'/><rect x='83.3' y='410.40' width='6.00' height='1.8' fill='#000'/><rect x='93.8' y='407.00' width='2.80' height='7.65' fill='#000'/><rect x='92.8' y='407.30' width='4.80' height='1.8' fill='#000'/><rect x='92.8' y='410.40' width='4.80' height='1.8' fill='#000'/><rect x='101.8' y='407.00' width='4.30' height='7.65' fill='#000'/><rect x='100.8' y='407.30' width='6.30' height='1.8' fill='#000'/><rect x='100.8' y='410.40' width='6.30' height='1.8' fill='#000'/><rect x='110.5' y='407.00' width='3.20' height='7.65' fill='#000'/><rect x='109.5' y='407.30' width='5.20' height='1.8' fill='#000'/><rect x='109.5' y='410.40' width='5.20' height='1.8' fill='#000'/><rect x='71' y='414.65' width='44' height='0.9' fill='#444'/><rect x='52.5' y='474.5' width='7' height='1' fill='#555'/><rect x='60' y='474' width='12' height='1.6' fill='#222'/><rect x='107' y='474.5' width='8' height='1.2' fill='#444'/></svg>
<div class='t' style='left:67.5px;top:485px;font-size:12px;transform:scaleX(0.86);transform-origin:0 0'>Page 3</div>
<div class='r' style='left:344px;top:52px;width:816px;height:14px;background:#fff;'></div>
<div class='r' style='left:344px;top:52px;width:38px;height:14px;background:#a0a0a0;'></div>
<div class='r' style='left:1122px;top:52px;width:38px;height:14px;background:#a0a0a0;'></div>
<svg style='left:0;top:0;overflow:hidden' width='1367' height='70'><defs><clipPath id='hrc'><rect x='344' y='52' width='817' height='14'/></clipPath></defs><g clip-path='url(#hrc)' font-family='Liberation Sans' font-size='10' fill='#000'><text x='344.00' y='62' text-anchor='middle'>0</text><rect x='353' y='57' width='1' height='4' fill='#000'/><rect x='363' y='56' width='1' height='6' fill='#000'/><rect x='372' y='57' width='1' height='4' fill='#000'/><text x='381.80' y='62' text-anchor='middle'>1</text><rect x='391' y='57' width='1' height='4' fill='#000'/><rect x='401' y='56' width='1' height='6' fill='#000'/><rect x='410' y='57' width='1' height='4' fill='#000'/><text x='419.59' y='62' text-anchor='middle'>2</text><rect x='429' y='57' width='1' height='4' fill='#000'/><rect x='438' y='56' width='1' height='6' fill='#000'/><rect x='448' y='57' width='1' height='4' fill='#000'/><text x='457.38' y='62' text-anchor='middle'>3</text><rect x='467' y='57' width='1' height='4' fill='#000'/><rect x='476' y='56' width='1' height='6' fill='#000'/><rect x='486' y='57' width='1' height='4' fill='#000'/><text x='495.18' y='62' text-anchor='middle'>4</text><rect x='505' y='57' width='1' height='4' fill='#000'/><rect x='514' y='56' width='1' height='6' fill='#000'/><rect x='524' y='57' width='1' height='4' fill='#000'/><text x='532.98' y='62' text-anchor='middle'>5</text><rect x='542' y='57' width='1' height='4' fill='#000'/><rect x='552' y='56' width='1' height='6' fill='#000'/><rect x='561' y='57' width='1' height='4' fill='#000'/><text x='570.77' y='62' text-anchor='middle'>6</text><rect x='580' y='57' width='1' height='4' fill='#000'/><rect x='590' y='56' width='1' height='6' fill='#000'/><rect x='599' y='57' width='1' height='4' fill='#000'/><text x='608.57' y='62' text-anchor='middle'>7</text><rect x='618' y='57' width='1' height='4' fill='#000'/><rect x='627' y='56' width='1' height='6' fill='#000'/><rect x='637' y='57' width='1' height='4' fill='#000'/><text x='646.36' y='62' text-anchor='middle'>8</text><rect x='656' y='57' width='1' height='4' fill='#000'/><rect x='665' y='56' width='1' height='6' fill='#000'/><rect x='675' y='57' width='1' height='4' fill='#000'/><text x='684.15' y='62' text-anchor='middle'>9</text><rect x='694' y='57' width='1' height='4' fill='#000'/><rect x='703' y='56' width='1' height='6' fill='#000'/><rect x='713' y='57' width='1' height='4' fill='#000'/><text x='721.95' y='62' text-anchor='middle'>10</text><rect x='731' y='57' width='1' height='4' fill='#000'/><rect x='741' y='56' width='1' height='6' fill='#000'/><rect x='750' y='57' width='1' height='4' fill='#000'/><text x='759.75' y='62' text-anchor='middle'>11</text><rect x='769' y='57' width='1' height='4' fill='#000'/><rect x='779' y='56' width='1' height='6' fill='#000'/><rect x='788' y='57' width='1' height='4' fill='#000'/><text x='797.54' y='62' text-anchor='middle'>12</text><rect x='807' y='57' width='1' height='4' fill='#000'/><rect x='816' y='56' width='1' height='6' fill='#000'/><rect x='826' y='57' width='1' height='4' fill='#000'/><text x='835.34' y='62' text-anchor='middle'>13</text><rect x='845' y='57' width='1' height='4' fill='#000'/><rect x='854' y='56' width='1' height='6' fill='#000'/><rect x='864' y='57' width='1' height='4' fill='#000'/><text x='873.13' y='62' text-anchor='middle'>14</text><rect x='883' y='57' width='1' height='4' fill='#000'/><rect x='892' y='56' width='1' height='6' fill='#000'/><rect x='901' y='57' width='1' height='4' fill='#000'/><text x='910.93' y='62' text-anchor='middle'>15</text><rect x='920' y='57' width='1' height='4' fill='#000'/><rect x='930' y='56' width='1' height='6' fill='#000'/><rect x='939' y='57' width='1' height='4' fill='#000'/><text x='948.72' y='62' text-anchor='middle'>16</text><rect x='958' y='57' width='1' height='4' fill='#000'/><rect x='968' y='56' width='1' height='6' fill='#000'/><rect x='977' y='57' width='1' height='4' fill='#000'/><text x='986.51' y='62' text-anchor='middle'>17</text><rect x='996' y='57' width='1' height='4' fill='#000'/><rect x='1005' y='56' width='1' height='6' fill='#000'/><rect x='1015' y='57' width='1' height='4' fill='#000'/><text x='1024.31' y='62' text-anchor='middle'>18</text><rect x='1034' y='57' width='1' height='4' fill='#000'/><rect x='1043' y='56' width='1' height='6' fill='#000'/><rect x='1053' y='57' width='1' height='4' fill='#000'/><text x='1062.11' y='62' text-anchor='middle'>19</text><rect x='1072' y='57' width='1' height='4' fill='#000'/><rect x='1081' y='56' width='1' height='6' fill='#000'/><rect x='1090' y='57' width='1' height='4' fill='#000'/><text x='1099.90' y='62' text-anchor='middle'>20</text><rect x='1109' y='57' width='1' height='4' fill='#000'/><rect x='1119' y='56' width='1' height='6' fill='#000'/><rect x='1128' y='57' width='1' height='4' fill='#000'/><text x='1137.70' y='62' text-anchor='middle'>21</text><rect x='1147' y='57' width='1' height='4' fill='#000'/><rect x='1157' y='56' width='1' height='6' fill='#000'/></g></svg>
<div class='r' style='left:154px;top:70px;width:1195px;height:434px;background:#a0a0a0;'></div>
<div class='r' style='left:1349px;top:70px;width:1px;height:434px;background:#f8f8f8;'></div>
<div class='r' style='left:1350px;top:70px;width:17px;height:434px;background:#f0f0f0;'></div>
<svg style='left:1350px;top:70px' width='17' height='17'><path d='M4.3 11L7.7 7.4L11.1 11' fill='none' stroke='#555' stroke-width='1.9'/></svg>
<div class='r' style='left:1350px;top:87px;width:15px;height:112px;background:#cdcdcd;'></div>
<div class='r' style='left:136px;top:88px;width:12px;height:416px;background:#fff;'></div>
<div class='r' style='left:136px;top:88px;width:12px;height:38px;background:#a0a0a0;'></div>
<svg style='left:0;top:0;overflow:hidden' width='160' height='504'><defs><clipPath id='vrc'><rect x='136' y='88' width='12' height='420'/></clipPath></defs><g clip-path='url(#vrc)' font-family='Liberation Sans' font-size='10' fill='#000'><text transform='translate(142.5 88.00) rotate(90)' x='0' y='3.5' text-anchor='middle'>0</text><rect x='142' y='97' width='3' height='1' fill='#000'/><rect x='141' y='107' width='5' height='1' fill='#000'/><rect x='142' y='116' width='3' height='1' fill='#000'/><text transform='translate(142.5 125.80) rotate(90)' x='0' y='3.5' text-anchor='middle'>1</text><rect x='142' y='135' width='3' height='1' fill='#000'/><rect x='141' y='145' width='5' height='1' fill='#000'/><rect x='142' y='154' width='3' height='1' fill='#000'/><text transform='translate(142.5 163.59) rotate(90)' x='0' y='3.5' text-anchor='middle'>2</text><rect x='142' y='173' width='3' height='1' fill='#000'/><rect x='141' y='182' width='5' height='1' fill='#000'/><rect x='142' y='192' width='3' height='1' fill='#000'/><text transform='translate(142.5 201.38) rotate(90)' x='0' y='3.5' text-anchor='middle'>3</text><rect x='142' y='211' width='3' height='1' fill='#000'/><rect x='141' y='220' width='5' height='1' fill='#000'/><rect x='142' y='230' width='3' height='1' fill='#000'/><text transform='translate(142.5 239.18) rotate(90)' x='0' y='3.5' text-anchor='middle'>4</text><rect x='142' y='249' width='3' height='1' fill='#000'/><rect x='141' y='258' width='5' height='1' fill='#000'/><rect x='142' y='268' width='3' height='1' fill='#000'/><text transform='translate(142.5 276.98) rotate(90)' x='0' y='3.5' text-anchor='middle'>5</text><rect x='142' y='286' width='3' height='1' fill='#000'/><rect x='141' y='296' width='5' height='1' fill='#000'/><rect x='142' y='305' width='3' height='1' fill='#000'/><text transform='translate(142.5 314.77) rotate(90)' x='0' y='3.5' text-anchor='middle'>6</text><rect x='142' y='324' width='3' height='1' fill='#000'/><rect x='141' y='334' width='5' height='1' fill='#000'/><rect x='142' y='343' width='3' height='1' fill='#000'/><text transform='translate(142.5 352.56) rotate(90)' x='0' y='3.5' text-anchor='middle'>7</text><rect x='142' y='362' width='3' height='1' fill='#000'/><rect x='141' y='371' width='5' height='1' fill='#000'/><rect x='142' y='381' width='3' height='1' fill='#000'/><text transform='translate(142.5 390.36) rotate(90)' x='0' y='3.5' text-anchor='middle'>8</text><rect x='142' y='400' width='3' height='1' fill='#000'/><rect x='141' y='409' width='5' height='1' fill='#000'/><rect x='142' y='419' width='3' height='1' fill='#000'/><text transform='translate(142.5 428.16) rotate(90)' x='0' y='3.5' text-anchor='middle'>9</text><rect x='142' y='438' width='3' height='1' fill='#000'/><rect x='141' y='447' width='5' height='1' fill='#000'/><rect x='142' y='457' width='3' height='1' fill='#000'/><text transform='translate(142.5 465.95) rotate(90)' x='0' y='3.5' text-anchor='middle'>10</text><rect x='142' y='475' width='3' height='1' fill='#000'/><rect x='141' y='485' width='5' height='1' fill='#000'/><rect x='142' y='494' width='3' height='1' fill='#000'/><text transform='translate(142.5 503.75) rotate(90)' x='0' y='3.5' text-anchor='middle'>11</text><rect x='142' y='513' width='3' height='1' fill='#000'/></g></svg>
<div class='r' style='left:344px;top:88px;width:817px;height:430px;background:#fff;border:1px solid #000;box-shadow:3px 3px 8px 2px rgba(0,0,0,0.3),-1px -1px 8px 1px rgba(0,0,0,0.2)'></div>
<div class='t' style='left:650.70px;top:129px;font-size:14px;font-weight:bold;letter-spacing:-0.525px;'>Taller SE Aud 16082017</div>
<div class='t' style='left:485.00px;top:154px;font-size:14px;font-weight:bold;letter-spacing:-0.607px;'>LIBRO MAYOR</div>
<div class='t' style='left:485.00px;top:179px;font-size:11.5px;font-weight:bold;letter-spacing:-0.533px;'>Despacho:</div>
<div class='t' style='left:541.00px;top:179px;font-size:11px;letter-spacing:-0.194px;'>Softmás</div>
<div class='t' style='left:485.00px;top:205px;font-size:11.5px;font-weight:bold;letter-spacing:-0.643px;'>Período:</div>
<div class='t' style='left:529.30px;top:205px;font-size:11px;letter-spacing:-0.065px;'>Del 1 de Enero al 31 de Diciembre de 2016</div>
<div class='t' style='left:981.60px;top:157px;font-size:11.5px;font-weight:bold;letter-spacing:-0.477px;'>Iniciales</div>
<div class='t' style='left:1064.60px;top:157px;font-size:11.5px;font-weight:bold;letter-spacing:-0.390px;'>Fecha</div>
<div class='t' style='left:905.00px;top:174px;font-size:11.5px;font-weight:bold;letter-spacing:-0.605px;'>Elaboró:</div>
<div class='t' style='left:905.00px;top:191px;font-size:11.5px;font-weight:bold;letter-spacing:-0.507px;'>Revisó:</div>
<div class='t' style='left:905.00px;top:208px;font-size:11.5px;font-weight:bold;letter-spacing:-0.604px;'>Supervisó:</div>
<div class='t' style='left:383.70px;top:232px;font-size:11.5px;font-weight:bold;letter-spacing:-0.392px;'>Cuenta - Descripcion</div>
<div class='t' style='left:491.00px;top:251px;font-size:11.5px;font-weight:bold;letter-spacing:-0.592px;'>Mes</div>
<div class='t' style='left:659.50px;top:251px;font-size:11.5px;font-weight:bold;letter-spacing:-0.638px;'>Cargos</div>
<div class='t' style='left:764.00px;top:251px;font-size:11.5px;font-weight:bold;letter-spacing:-0.819px;'>Abonos</div>
<div class='t' style='left:879.70px;top:251px;font-size:11.5px;font-weight:bold;letter-spacing:-0.723px;'>Saldo</div>
<div class='t' style='left:942.10px;top:251px;font-size:11.5px;font-weight:bold;letter-spacing:-0.606px;'>Acum. Cargos</div>
<div class='t' style='left:1046.50px;top:251px;font-size:11.5px;font-weight:bold;letter-spacing:-0.693px;'>Acum. Abonos</div>
<div class='t' style='left:385.30px;top:270px;font-size:11.5px;font-weight:bold;letter-spacing:-0.722px;'>1020000000 - BANCOS</div>
<div class='t' style='left:862.90px;top:271px;font-size:10px;'>90,958.59</div>
<div class='t' style='left:490.50px;top:289px;font-size:10px;'>Enero 2016</div>
<div class='t' style='left:646.74px;top:289px;font-size:10px;'>401,500.00</div>
<div class='t' style='left:752.14px;top:289px;font-size:10px;'>480,542.34</div>
<div class='t' style='left:863.95px;top:289px;font-size:10px;'>11,916.25</div>
<div class='t' style='left:963.84px;top:289px;font-size:10px;'>401,500.00</div>
<div class='t' style='left:1068.34px;top:289px;font-size:10px;'>480,542.34</div>
<div class='t' style='left:490.50px;top:307px;font-size:10px;'>Febrero 2016</div>
<div class='t' style='left:646.74px;top:307px;font-size:10px;'>165,313.00</div>
<div class='t' style='left:752.14px;top:307px;font-size:10px;'>164,378.01</div>
<div class='t' style='left:863.20px;top:307px;font-size:10px;'>12,851.24</div>
<div class='t' style='left:963.84px;top:307px;font-size:10px;'>566,813.00</div>
<div class='t' style='left:1068.34px;top:307px;font-size:10px;'>644,920.35</div>
<div class='t' style='left:490.50px;top:326px;font-size:10px;'>Marzo 2016</div>
<div class='t' style='left:652.30px;top:326px;font-size:10px;'>94,662.06</div>
<div class='t' style='left:757.70px;top:326px;font-size:10px;'>89,007.67</div>
<div class='t' style='left:863.20px;top:326px;font-size:10px;'>18,505.63</div>
<div class='t' style='left:963.84px;top:326px;font-size:10px;'>661,475.06</div>
<div class='t' style='left:1068.34px;top:326px;font-size:10px;'>733,928.02</div>
<div class='t' style='left:490.50px;top:344px;font-size:10px;'>Abril 2016</div>
<div class='t' style='left:657.86px;top:344px;font-size:10px;'>1,500.00</div>
<div class='t' style='left:757.70px;top:344px;font-size:10px;'>13,010.25</div>
<div class='t' style='left:868.76px;top:344px;font-size:10px;'>6,995.38</div>
<div class='t' style='left:963.84px;top:344px;font-size:10px;'>662,975.06</div>
<div class='t' style='left:1068.34px;top:344px;font-size:10px;'>746,938.27</div>
<div class='t' style='left:490.50px;top:362px;font-size:10px;'>Mayo 2016</div>
<div class='t' style='left:657.86px;top:362px;font-size:10px;'>3,000.00</div>
<div class='t' style='left:782.73px;top:362px;font-size:10px;'>0.00</div>
<div class='t' style='left:868.76px;top:362px;font-size:10px;'>9,995.38</div>
<div class='t' style='left:963.84px;top:362px;font-size:10px;'>665,975.06</div>
<div class='t' style='left:1068.34px;top:362px;font-size:10px;'>746,938.27</div>
<div class='t' style='left:490.50px;top:380px;font-size:10px;'>Junio 2016</div>
<div class='t' style='left:677.33px;top:380px;font-size:10px;'>0.00</div>
<div class='t' style='left:771.61px;top:380px;font-size:10px;'>351.48</div>
<div class='t' style='left:868.76px;top:380px;font-size:10px;'>9,643.90</div>
<div class='t' style='left:963.84px;top:380px;font-size:10px;'>665,975.06</div>
<div class='t' style='left:1068.34px;top:380px;font-size:10px;'>747,289.75</div>
<div class='t' style='left:490.50px;top:398px;font-size:10px;'>Julio 2016</div>
<div class='t' style='left:657.86px;top:398px;font-size:10px;'>3,500.00</div>
<div class='t' style='left:763.26px;top:398px;font-size:10px;'>1,234.25</div>
<div class='t' style='left:863.95px;top:398px;font-size:10px;'>11,909.65</div>
<div class='t' style='left:963.84px;top:398px;font-size:10px;'>669,475.06</div>
<div class='t' style='left:1068.34px;top:398px;font-size:10px;'>748,524.00</div>
<div class='t' style='left:490.50px;top:416px;font-size:10px;'>Agosto 2016</div>
<div class='t' style='left:652.30px;top:416px;font-size:10px;'>16,750.00</div>
<div class='t' style='left:763.26px;top:416px;font-size:10px;'>9,196.48</div>
<div class='t' style='left:863.20px;top:416px;font-size:10px;'>19,463.17</div>
<div class='t' style='left:963.84px;top:416px;font-size:10px;'>686,225.06</div>
<div class='t' style='left:1068.34px;top:416px;font-size:10px;'>757,720.48</div>
<div class='t' style='left:490.50px;top:435px;font-size:10px;'>Septiembre 2016</div>
<div class='t' style='left:652.30px;top:435px;font-size:10px;'>18,200.00</div>
<div class='t' style='left:757.70px;top:435px;font-size:10px;'>31,566.84</div>
<div class='t' style='left:868.76px;top:435px;font-size:10px;'>6,096.33</div>
<div class='t' style='left:963.84px;top:435px;font-size:10px;'>704,425.06</div>
<div class='t' style='left:1068.34px;top:435px;font-size:10px;'>789,287.32</div>
<div class='t' style='left:490.50px;top:453px;font-size:10px;'>Octubre 2016</div>
<div class='t' style='left:666.21px;top:453px;font-size:10px;'>750.00</div>
<div class='t' style='left:771.61px;top:453px;font-size:10px;'>708.76</div>
<div class='t' style='left:868.76px;top:453px;font-size:10px;'>6,137.57</div>
<div class='t' style='left:963.84px;top:453px;font-size:10px;'>705,175.06</div>
<div class='t' style='left:1068.34px;top:453px;font-size:10px;'>789,996.08</div>
<div class='t' style='left:490.50px;top:471px;font-size:10px;'>Noviembre 2016</div>
<div class='t' style='left:657.86px;top:471px;font-size:10px;'>6,750.00</div>
<div class='t' style='left:763.26px;top:471px;font-size:10px;'>6,735.20</div>
<div class='t' style='left:868.76px;top:471px;font-size:10px;'>6,152.37</div>
<div class='t' style='left:964.59px;top:471px;font-size:10px;'>711,925.06</div>
<div class='t' style='left:1068.34px;top:471px;font-size:10px;'>796,731.28</div>
<div class='t' style='left:490.50px;top:489px;font-size:10px;'>Diciembre 2016</div>
<div class='t' style='left:677.33px;top:489px;font-size:10px;'>0.00</div>
<div class='t' style='left:771.61px;top:489px;font-size:10px;'>760.96</div>
<div class='t' style='left:868.76px;top:489px;font-size:10px;'>5,391.41</div>
<div class='t' style='left:964.59px;top:489px;font-size:10px;'>711,925.06</div>
<div class='t' style='left:1068.34px;top:489px;font-size:10px;'>797,492.24</div>
<svg style='left:380px;top:125px' width='100' height='100' viewBox='380 125 100 100'>
<defs><linearGradient id='lg' x1='0' x2='1'><stop offset='0' stop-color='#1ea0ff'/><stop offset='0.45' stop-color='#0a5ae6'/><stop offset='1' stop-color='#0000c8'/></linearGradient></defs>
<path d='M397 128.8H446.3V223H397Q384.6 223 384.6 210.6V141.2Q384.6 128.8 397 128.8Z' fill='url(#lg)'/>
<text x='386.2' y='187.5' font-family='Liberation Sans' font-weight='bold' font-size='44' fill='#fff'>s</text>
<path d='M414.4 139.6H441.5V146H420.5V173.5H439V179.5H420.5V207.2H441.5V213.5H414.4Z' fill='#fff'/>
<text x='447.3' y='158.8' font-family='Liberation Sans' font-weight='bold' font-size='35.5' fill='#000'>A</text>
<text x='447.3' y='188.3' font-family='Liberation Sans' font-weight='bold' font-size='35.5' fill='#000'>U</text>
<text x='447.3' y='218.2' font-family='Liberation Sans' font-weight='bold' font-size='35.5' fill='#000'>D</text>
</svg>
<div class='r' style='left:904px;top:154px;width:216px;height:1px;background:#3a3a3a'></div>
<div class='r' style='left:904px;top:171px;width:216px;height:2px;background:#7a7a7a'></div>
<div class='r' style='left:904px;top:188px;width:216px;height:1px;background:#505050'></div>
<div class='r' style='left:904px;top:205px;width:216px;height:2px;background:#7a7a7a'></div>
<div class='r' style='left:904px;top:222px;width:216px;height:2px;background:#7a7a7a'></div>
<div class='r' style='left:382px;top:226px;width:740px;height:2px;background:#7474b8'></div>
<div class='r' style='left:382px;top:265px;width:740px;height:1px;background:#202080'></div>
<div class='r' style='left:593px;top:501px;width:529px;height:1px;background:#303030'></div>
</body></html>
